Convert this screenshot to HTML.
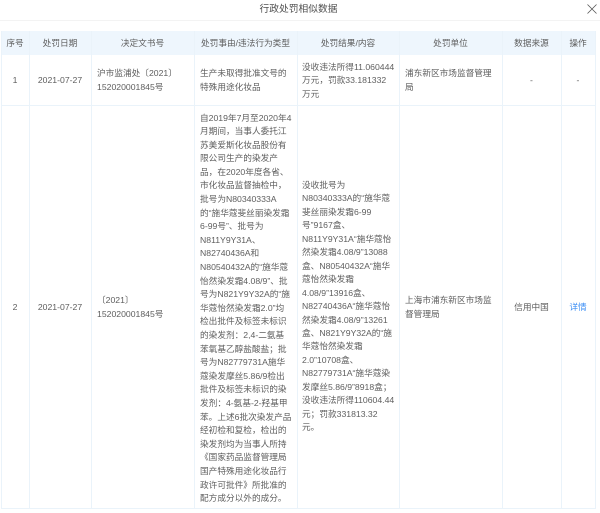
<!DOCTYPE html>
<html lang="zh">
<head>
<meta charset="utf-8">
<title>行政处罚相似数据</title>
<style>
html,body{margin:0;padding:0;background:#fff;}
body{width:600px;height:513px;overflow:hidden;position:relative;}
#w{position:absolute;left:0;top:0;width:600px;height:513px;font-family:"Liberation Sans","Noto Sans CJK SC",sans-serif;font-size:8.67px;line-height:13.6px;color:#5e5e5e;filter:blur(.35px);}
.c{position:absolute;white-space:nowrap;}
.m{text-align:center;}
.v{position:absolute;top:31px;height:477px;width:1px;background:#eaf3fa;}
.h{position:absolute;left:1px;width:595px;height:1px;background:#eaf3fa;}
</style>
</head>
<body>
<div id="w">
<div class="c m" style="left:200px;width:197px;top:2.5px;font-size:9.75px;line-height:13px;color:#4f4f4f;">行政处罚相似数据</div>
<svg style="position:absolute;left:587px;top:4px" width="10" height="10" viewBox="0 0 10 10"><path d="M.5.5L9.5 9.5M9.5.5L.5 9.5" stroke="#555" stroke-width=".8" fill="none"/></svg>
<div style="position:absolute;left:0;top:20px;width:600px;height:1px;background:#f3f3f3"></div>
<div style="position:absolute;left:1px;top:31px;width:595px;height:24px;background:#eef6fd"></div>
<div class="h" style="top:105px"></div>
<div class="h" style="top:508px"></div>
<div class="v" style="left:1px"></div>
<div class="v" style="left:29px"></div>
<div class="v" style="left:91px"></div>
<div class="v" style="left:194px"></div>
<div class="v" style="left:297px"></div>
<div class="v" style="left:399px"></div>
<div class="v" style="left:502px"></div>
<div class="v" style="left:561px"></div>
<div class="v" style="left:595px"></div>

<div class="c m" style="left:1px;width:28px;top:36.5px">序号</div>
<div class="c m" style="left:29px;width:62px;top:36.5px">处罚日期</div>
<div class="c m" style="left:91px;width:103px;top:36.5px">决定文书号</div>
<div class="c m" style="left:194px;width:103px;top:36.5px">处罚事由/违法行为类型</div>
<div class="c m" style="left:297px;width:102px;top:36.5px">处罚结果/内容</div>
<div class="c m" style="left:399px;width:103px;top:36.5px">处罚单位</div>
<div class="c m" style="left:502px;width:59px;top:36.5px">数据来源</div>
<div class="c m" style="left:561px;width:34px;top:36.5px">操作</div>

<div class="c m" style="left:1px;width:28px;top:74px">1</div>
<div class="c m" style="left:29px;width:62px;top:74px">2021-07-27</div>
<div class="c" style="left:97px;top:67px">沪市监浦处〔2021〕<br>152020001845号</div>
<div class="c" style="left:200px;top:67px">生产未取得批准文号的<br>特殊用途化妆品</div>
<div class="c" style="left:302px;top:60.5px">没收违法所得11.060444<br>万元，罚款33.181332<br>万元</div>
<div class="c" style="left:405px;top:67px">浦东新区市场监督管理<br>局</div>
<div class="c m" style="left:502px;width:59px;top:74px">-</div>
<div class="c m" style="left:561px;width:34px;top:74px">-</div>

<div class="c m" style="left:1px;width:28px;top:300.5px">2</div>
<div class="c m" style="left:29px;width:62px;top:300.5px">2021-07-27</div>
<div class="c" style="left:97px;top:294px">〔2021〕<br>152020001845号</div>
<div class="c" style="left:200px;top:111.5px">自2019年7月至2020年4<br>月期间，当事人委托江<br>苏美爱斯化妆品股份有<br>限公司生产的染发产<br>品，在2020年度各省、<br>市化妆品监督抽检中，<br>批号为N80340333A<br>的“施华蔻斐丝丽染发霜<br>6-99号”、批号为<br>N811Y9Y31A、<br>N82740436A和<br>N80540432A的“施华蔻<br>怡然染发霜4.08/9”、批<br>号为N821Y9Y32A的“施<br>华蔻怡然染发霜2.0”均<br>检出批件及标签未标识<br>的染发剂：2,4-二氨基<br>苯氧基乙醇盐酸盐；批<br>号为N82779731A施华<br>蔻染发摩丝5.86/9检出<br>批件及标签未标识的染<br>发剂：4-氨基-2-羟基甲<br>苯。上述6批次染发产品<br>经初检和复检，检出的<br>染发剂均为当事人所持<br>《国家药品监督管理局<br>国产特殊用途化妆品行<br>政许可批件》所批准的<br>配方成分以外的成分。</div>
<div class="c" style="left:302px;top:179px;line-height:13.45px">没收批号为<br>N80340333A的“施华蔻<br>斐丝丽染发霜6-99<br>号”9167盒、<br>N811Y9Y31A“施华蔻怡<br>然染发霜4.08/9”13088<br>盒、N80540432A“施华<br>蔻怡然染发霜<br>4.08/9”13916盒、<br>N82740436A“施华蔻怡<br>然染发霜4.08/9”13261<br>盒、N821Y9Y32A的“施<br>华蔻怡然染发霜<br>2.0”10708盒、<br>N82779731A“施华蔻染<br>发摩丝5.86/9”8918盒；<br>没收违法所得110604.44<br>元；罚款331813.32<br>元。</div>
<div class="c" style="left:405px;top:294px">上海市浦东新区市场监<br>督管理局</div>
<div class="c m" style="left:502px;width:59px;top:300.5px">信用中国</div>
<div class="c m" style="left:561px;width:34px;top:300.5px;color:#3d8ff5">详情</div>
</div>
</body>
</html>
